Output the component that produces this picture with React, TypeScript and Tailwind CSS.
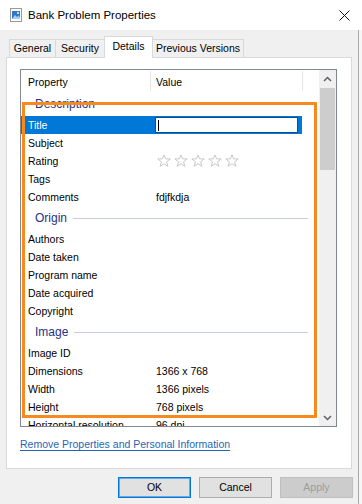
import React from "react";

type Row =
  | { kind: "group"; label: string }
  | { kind: "row"; name: string; value?: string; special?: "title" | "rating" };

const rows: Row[] = [
  { kind: "group", label: "Description" },
  { kind: "row", name: "Title", special: "title" },
  { kind: "row", name: "Subject" },
  { kind: "row", name: "Rating", special: "rating" },
  { kind: "row", name: "Tags" },
  { kind: "row", name: "Comments", value: "fdjfkdja" },
  { kind: "group", label: "Origin" },
  { kind: "row", name: "Authors" },
  { kind: "row", name: "Date taken" },
  { kind: "row", name: "Program name" },
  { kind: "row", name: "Date acquired" },
  { kind: "row", name: "Copyright" },
  { kind: "group", label: "Image" },
  { kind: "row", name: "Image ID" },
  { kind: "row", name: "Dimensions", value: "1366 x 768" },
  { kind: "row", name: "Width", value: "1366 pixels" },
  { kind: "row", name: "Height", value: "768 pixels" },
  { kind: "row", name: "Horizontal resolution", value: "96 dpi" },
];

function Star() {
  return (
    <svg width="14" height="14" viewBox="-0.5 -0.5 15 15">
      <polygon
        points="7,0.5 8.7,4.65 13.66,4.84 9.76,7.9 11.11,12.66 7,9.9 2.89,12.66 4.24,7.9 0.34,4.84 5.3,4.65"
        fill="none"
        stroke="#c4c4c4"
        strokeWidth="1"
        strokeLinejoin="round"
      />
    </svg>
  );
}

function FileIcon() {
  return (
    <svg width="12" height="14" viewBox="0 0 12 14">
      <rect x="0.5" y="0.5" width="11" height="13" fill="#ffffff" stroke="#9a9a9a" />
      <rect x="2" y="3" width="8" height="8" fill="#2f78c8" />
      <path d="M2 11 L5 7 L7 9 L8.5 7.5 L10 9.5 L10 11 Z" fill="#9fd0f5" />
      <circle cx="8" cy="5" r="1" fill="#ffffff" />
    </svg>
  );
}

function Chevron({ up }: { up?: boolean }) {
  return (
    <svg width="9" height="6" viewBox="0 0 9 6">
      <path
        d={up ? "M1 5 L4.5 1.5 L8 5" : "M1 1 L4.5 4.5 L8 1"}
        fill="none"
        stroke="#606060"
        strokeWidth="1.5"
      />
    </svg>
  );
}

export default function App() {
  return (
    <div className="w-[362px] h-[504px] bg-[#f0f0f0] flex flex-col overflow-hidden font-['Liberation_Sans',Arial,sans-serif] text-black text-[10.5px] leading-[13px]">
      {/* Title bar */}
      <div className="h-[30px] bg-white flex items-center shrink-0">
        <div className="ml-[10px] flex">
          <FileIcon />
        </div>
        <span className="ml-[6px] text-[11.5px]">Bank Problem Properties</span>
        <svg className="ml-auto mr-[12px]" width="11" height="11" viewBox="0 0 11 11">
          <path d="M0.5 0.5 L10.5 10.5 M10.5 0.5 L0.5 10.5" stroke="#111" strokeWidth="1" />
        </svg>
      </div>

      <div className="flex flex-1">
        <div className="w-[358px] flex flex-col pl-[6px]">
          {/* Tabs */}
          <div className="h-[27px] flex items-end pl-[3px]">
            <div className="w-[47px] h-[18px] border border-b-0 border-[#d9d9d9] flex items-center justify-center">
              General
            </div>
            <div className="-ml-px w-[50px] h-[18px] border border-b-0 border-[#d9d9d9] flex items-center justify-center">
              Security
            </div>
            <div className="-ml-px relative z-10 -mb-px w-[49px] h-[22px] bg-white border border-b-0 border-[#d9d9d9] flex items-start justify-center pt-[3px]">
              Details
            </div>
            <div className="-ml-px w-[92px] h-[18px] border border-b-0 border-[#d9d9d9] flex items-center justify-center">
              Previous Versions
            </div>
          </div>

          {/* Panel */}
          <div className="w-[346px] h-[412px] bg-white border border-[#d9d9d9] pl-[13px] pt-[11px] flex flex-col">
            <div className="relative w-[317px] h-[358px] border border-[#828790] flex">
              <div className="flex-1 flex flex-col overflow-hidden">
                {/* header */}
                <div className="h-[22px] flex items-center shrink-0">
                  <div className="w-[129px] pl-[7px] pt-[3px]">Property</div>
                  <div className="w-px h-[20px] bg-[#e5e5e5]" />
                  <div className="w-[151px] pl-[5px] pt-[3px]">Value</div>
                  <div className="w-px h-[20px] bg-[#e5e5e5]" />
                </div>
                {rows.map((r, i) =>
                  r.kind === "group" ? (
                    <div key={i} className="h-[24px] flex items-center pl-[14px] pr-[11px] shrink-0">
                      <span className="text-[12px] text-[#1e3287]">{r.label}</span>
                      <div className="flex-1 h-px bg-[#c8cedf] ml-[6px]" />
                    </div>
                  ) : r.special === "title" ? (
                    <div key={i} className="h-[18px] flex items-center shrink-0">
                      <div className="w-[281px] h-[18px] bg-[#0078d7] flex items-center">
                        <div className="w-[129px] pl-[7px] text-white">{r.name}</div>
                        <div className="ml-[5px] w-[143px] h-[16px] bg-white border border-[#0c4f8e] flex items-center pl-[2px]">
                          <div className="w-px h-[11px] bg-black" />
                        </div>
                      </div>
                    </div>
                  ) : (
                    <div key={i} className="h-[18px] flex items-center shrink-0">
                      <div className="w-[129px] pl-[7px] whitespace-nowrap">{r.name}</div>
                      {r.special === "rating" ? (
                        <div className="pl-[7px] flex gap-[3px]">
                          <Star />
                          <Star />
                          <Star />
                          <Star />
                          <Star />
                        </div>
                      ) : (
                        <div className="pl-[6px] whitespace-nowrap">{r.value ?? ""}</div>
                      )}
                    </div>
                  )
                )}
              </div>
              {/* scrollbar */}
              <div className="w-[17px] bg-[#f0f0f0] flex flex-col shrink-0">
                <div className="h-[17px] flex items-center justify-center">
                  <Chevron up />
                </div>
                <div className="flex-1 px-[1px] pt-[1px]">
                  <div className="h-[82px] bg-[#cdcdcd]" />
                </div>
                <div className="h-[17px] flex items-center justify-center">
                  <Chevron />
                </div>
              </div>
              {/* highlight annotation */}
              <div className="absolute left-[1px] top-[32px] w-[295px] h-[316px] border-[3px] border-[#f68a1e] pointer-events-none" />
            </div>
            <div className="mt-[11px]">
              <span className="text-[#1f66b3] underline decoration-[#1f66b3] underline-offset-[2px]">
                Remove Properties and Personal Information
              </span>
            </div>
          </div>

          {/* Buttons */}
          <div className="mt-[8px] flex pl-[112px] gap-[8px]">
            <div className="w-[73px] h-[21px] bg-[#e1e1e1] border border-[#0078d7] shadow-[inset_0_0_0_1px_#6aa8e4] flex items-center justify-center">
              OK
            </div>
            <div className="w-[73px] h-[21px] bg-[#e1e1e1] border border-[#adadad] flex items-center justify-center">
              Cancel
            </div>
            <div className="w-[73px] h-[21px] bg-[#cccccc] border border-[#bfbfbf] text-[#9c9c9c] flex items-center justify-center">
              Apply
            </div>
          </div>
        </div>
        <div className="w-px bg-[#a9a9a9]" />
        <div className="flex-1 bg-[#f6f6f6]" />
      </div>
    </div>
  );
}
